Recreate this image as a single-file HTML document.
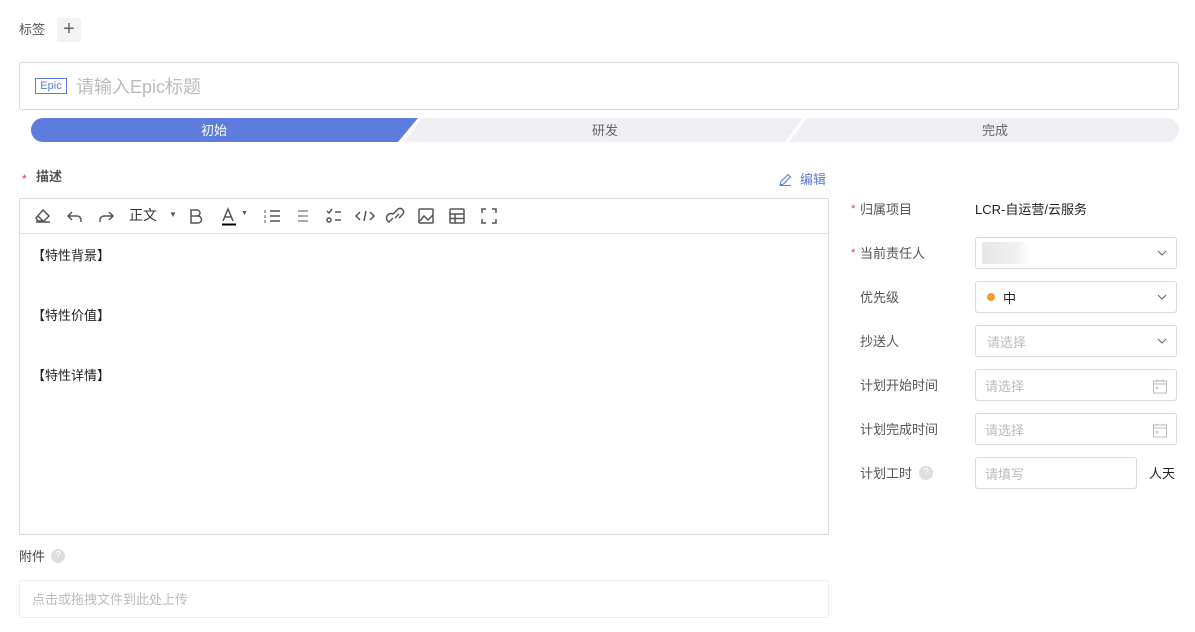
<!DOCTYPE html>
<html><head><meta charset="utf-8"><style>
*{box-sizing:border-box;margin:0;padding:0}
body{width:1195px;height:632px;background:#fff;font-family:"Liberation Sans","Noto Sans CJK SC",sans-serif;font-size:13px;color:#333;position:relative;overflow:hidden}
.a{position:absolute}
.lbl{color:#555;font-size:13px}
.sel{position:absolute;left:975px;width:202px;height:32px;border:1px solid #d9d9d9;border-radius:3px;padding-left:11px;font-size:13px;color:#bbb;display:flex;align-items:center}
.chev{position:absolute;right:9px;top:10px}
.cal{position:absolute;right:8px;top:8px}
.tb{position:absolute;top:207px;color:#555;font-size:14px}
</style></head><body>
<div class="a lbl" style="left:19px;top:19px">标签</div>
<div class="a" style="left:57px;top:18px;width:24px;height:24px;background:#f3f3f3;border-radius:2px;color:#666;font-size:20px;line-height:23px;text-align:center">+</div>

<div class="a" style="left:19px;top:62px;width:1160px;height:48px;border:1px solid #d9d9d9;border-radius:3px"></div>
<div class="a" style="left:35px;top:78px;width:32px;height:16px;border:1px solid #5b7bde;color:#5b7bde;font-size:11px;line-height:14px;text-align:center">Epic</div>
<div class="a" style="left:76px;top:73px;font-size:18px;color:#bbb">请输入Epic标题</div>

<svg class="a" style="left:0;top:118px" width="1195" height="25">
<path d="M43 0H418L398 24H43A12 12 0 0 1 31 12A12 12 0 0 1 43 0Z" fill="#5d7cde"/>
<path d="M422 0H803L785 24H404Z" fill="#eeeff3"/>
<path d="M807 0H1167A12 12 0 0 1 1179 12A12 12 0 0 1 1167 24H789Z" fill="#eeeff3"/>
<text x="214" y="17" fill="#fff" font-size="13" text-anchor="middle" font-family="Liberation Sans,Noto Sans CJK SC,sans-serif">初始</text>
<text x="605" y="17" fill="#666" font-size="13" text-anchor="middle" font-family="Liberation Sans,Noto Sans CJK SC,sans-serif">研发</text>
<text x="995" y="17" fill="#666" font-size="13" text-anchor="middle" font-family="Liberation Sans,Noto Sans CJK SC,sans-serif">完成</text>
</svg>

<div class="a" style="left:22px;top:172px;color:#e33;font-size:12px">*</div>
<div class="a" style="left:36px;top:166px;color:#555;font-weight:bold;font-size:13px">描述</div>
<svg class="a" style="left:778px;top:173px" width="14" height="14"><path d="M2 12L3 8.5L10 1.5L12.5 4L5.5 11Z M2 12.5H13" fill="none" stroke="#5b7bde" stroke-width="1.1"/></svg>
<div class="a" style="left:800px;top:169px;color:#5b7bde;font-size:13px">编辑</div>

<div class="a" style="left:19px;top:198px;width:810px;height:337px;border:1px solid #d9d9d9"></div>
<div class="a" style="left:20px;top:233px;width:808px;height:1px;background:#e3e3e3"></div>
<svg class="a" style="left:34px;top:206px" width="470" height="20" fill="none" stroke="#555" stroke-width="1.5">
<path d="M2 12L9 4L15 10L10 15H4Z M2 16H16" /><path d="M4 10L9 15" />
<path d="M38 6L34 10L38 14 M34 10H43A4 4 0 0 1 47 14V16"/>
<path d="M75 6L79 10L75 14 M79 10H70A4 4 0 0 0 66 14V16"/>
<path d="M157 4H163A3 3 0 0 1 163 10H157V4Z M157 10H164A3.5 3.5 0 0 1 164 17H157Z"/>
<path d="M189 15L194 3L199 15 M191 11H197"/><path d="M188 18.5H202" stroke="#000" stroke-width="2"/>
<path d="M236 5H246 M236 10H246 M236 15H246" /><path d="M231 4V7 M231 9V12 M231 14V17" stroke-width="1"/>
<path d="M264 5H274 M264 10H274 M264 15H274" stroke-width="1"/>
<path d="M293 5L295 7L298 3 M301 6H307 M301 14H307"/><circle cx="295" cy="14" r="2"/>
<path d="M326 6L322 10L326 14 M336 6L340 10L336 14 M332 5L330 15"/>
<path d="M359 12L355 16A3 3 0 0 1 359 8L363 4A3 3 0 0 1 369 8L365 12 M361 12L365 8"/>
<rect x="385" y="3" width="14" height="14" rx="1"/><path d="M386 15L390 10L394 14L399 9"/>
<rect x="416" y="3" width="14" height="14" rx="1"/><path d="M416 8H430 M416 12.5H430 M421 8V17"/>
<path d="M448 7V3H452 M458 3H462V7 M462 13V17H458 M452 17H448V13"/>
</svg>
<div class="tb" style="left:129px;top:205px;color:#333">正文</div>
<div class="a" style="left:169px;top:210px;font-size:8px;color:#555">▼</div>
<div class="a" style="left:241px;top:210px;font-size:7px;color:#555">▼</div>

<div class="a" style="left:32px;top:245px;color:#222">【特性背景】</div>
<div class="a" style="left:32px;top:305px;color:#222">【特性价值】</div>
<div class="a" style="left:32px;top:365px;color:#222">【特性详情】</div>

<div class="a lbl" style="left:19px;top:546px;color:#444">附件</div>
<div class="a" style="left:51px;top:549px;width:14px;height:14px;border-radius:50%;background:#ddd;color:#fff;font-size:10px;text-align:center;line-height:14px">?</div>
<div class="a" style="left:19px;top:580px;width:810px;height:38px;border:1px solid #eee;border-radius:2px"></div>
<div class="a" style="left:32px;top:589px;color:#bbb;font-size:13px">点击或拖拽文件到此处上传</div>

<div class="a" style="left:851px;top:203px;color:#e33;font-size:11px">*</div>
<div class="a lbl" style="left:860px;top:199px">归属项目</div>
<div class="a" style="left:975px;top:199px;color:#222;font-size:13px">LCR-自运营/云服务</div>

<div class="a" style="left:851px;top:247px;color:#e33;font-size:11px">*</div>
<div class="a lbl" style="left:860px;top:243px">当前责任人</div>
<div class="sel" style="top:237px"><div class="a" style="left:6px;top:4px;width:48px;height:22px;background:linear-gradient(90deg,#e6e6e6,#f0f0f0 70%,#fff)"></div><svg class="chev" width="10" height="10"><path d="M1 3L5 7L9 3" fill="none" stroke="#666"/></svg></div>

<div class="a lbl" style="left:860px;top:287px">优先级</div>
<div class="sel" style="top:281px;color:#222"><span style="display:inline-block;width:8px;height:8px;border-radius:50%;background:#f59a3c;margin-right:8px"></span>中<svg class="chev" width="10" height="10"><path d="M1 3L5 7L9 3" fill="none" stroke="#666"/></svg></div>

<div class="a lbl" style="left:860px;top:331px">抄送人</div>
<div class="sel" style="top:325px">请选择<svg class="chev" width="10" height="10"><path d="M1 3L5 7L9 3" fill="none" stroke="#666"/></svg></div>

<div class="a lbl" style="left:860px;top:375px">计划开始时间</div>
<div class="sel" style="top:369px;padding-left:9px">请选择<svg class="cal" width="16" height="16"><rect x="1.5" y="3" width="13" height="12" fill="none" stroke="#bbb"/><path d="M1.5 6H14.5 M5 1.5V4 M11 1.5V4" stroke="#bbb"/><rect x="4" y="9" width="2" height="2" fill="none" stroke="#bbb" stroke-width=".7"/></svg></div>

<div class="a lbl" style="left:860px;top:419px">计划完成时间</div>
<div class="sel" style="top:413px;padding-left:9px">请选择<svg class="cal" width="16" height="16"><rect x="1.5" y="3" width="13" height="12" fill="none" stroke="#bbb"/><path d="M1.5 6H14.5 M5 1.5V4 M11 1.5V4" stroke="#bbb"/><rect x="4" y="9" width="2" height="2" fill="none" stroke="#bbb" stroke-width=".7"/></svg></div>

<div class="a lbl" style="left:860px;top:463px">计划工时</div>
<div class="a" style="left:919px;top:466px;width:14px;height:14px;border-radius:50%;background:#ddd;color:#fff;font-size:10px;text-align:center;line-height:14px">?</div>
<div class="sel" style="top:457px;width:162px;padding-left:9px">请填写</div>
<div class="a" style="left:1149px;top:463px;color:#222;font-size:13px">人天</div>
</body></html>
